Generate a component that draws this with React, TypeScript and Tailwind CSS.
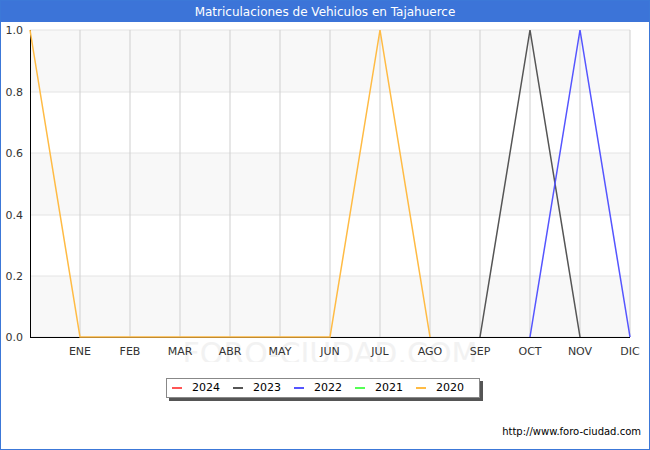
export default function App() {
  const months = ["ENE","FEB","MAR","ABR","MAY","JUN","JUL","AGO","SEP","OCT","NOV","DIC"];
  const ys = [337, 276, 215, 153, 92, 30];
  const legend = [["2024","#ff5555"],["2023","#555555"],["2022","#5555ff"],["2021","#55ff55"],["2020","#ffbb44"]];
  return (
    <div className="w-[650px] h-[450px] border border-[#3c78d8] bg-white flex flex-col relative" style={{ fontFamily: '"DejaVu Sans", sans-serif' }}>
      <div className="h-[21px] bg-[#3c74d8] text-white text-[12px] flex items-center justify-center shrink-0">Matriculaciones de Vehiculos en Tajahuerce</div>
      <svg width="648" height="340" viewBox="1 22 648 340" className="shrink-0">
        <rect x="30" y="30" width="600" height="62" fill="#f8f8f8" />
        <rect x="30" y="153" width="600" height="62" fill="#f8f8f8" />
        <rect x="30" y="276" width="600" height="61" fill="#f8f8f8" />
        {ys.map((y) => <line key={y} x1="30" x2="630" y1={y} y2={y} stroke="#e4e4e4" />)}
        {months.map((m, i) => <line key={m} x1={80 + i * 50} x2={80 + i * 50} y1="30" y2="337" stroke="#cfcfcf" />)}
        <text x="330" y="364" textAnchor="middle" fontSize="30" fill="#f2f2f2">FORO-CIUDAD.COM</text>
        <line x1="30.5" x2="30.5" y1="30" y2="337" stroke="#000" />
        <line x1="30" x2="630" y1="337.5" y2="337.5" stroke="#000" />
        {["0.0","0.2","0.4","0.6","0.8","1.0"].map((t, i) => <text key={t} x="23" y={ys[i] + 4} textAnchor="end" fontSize="11" fill="#333">{t}</text>)}
        {months.map((m, i) => <text key={m} x={80 + i * 50} y="355" textAnchor="middle" fontSize="11" fill="#333">{m}</text>)}
        <polyline points="30,30 80,337 330,337 380,30 430,337" fill="none" stroke="#ffbb44" strokeWidth="1.5" />
        <polyline points="480,337 530,30 580,337" fill="none" stroke="#555555" strokeWidth="1.5" />
        <polyline points="530,337 580,30 630,337" fill="none" stroke="#5555ff" strokeWidth="1.5" />
      </svg>
      <div className="flex justify-center mt-[16px] pr-[4px]">
        <div className="flex items-center border border-[#888] bg-white shadow-[3px_3px_0_#555] h-[20px] pl-[5px] pr-[2px] text-[11px] text-black">
          {legend.map(([l, c]) => (
            <div key={l} className="flex items-center w-[61px]">
              <span className="w-[10px] h-[2px] mr-[10px]" style={{ background: c }} />
              <span>{l}</span>
            </div>
          ))}
        </div>
      </div>
      <div className="absolute right-[8px] bottom-[10px] text-[10px] text-black">http://www.foro-ciudad.com</div>
    </div>
  );
}
